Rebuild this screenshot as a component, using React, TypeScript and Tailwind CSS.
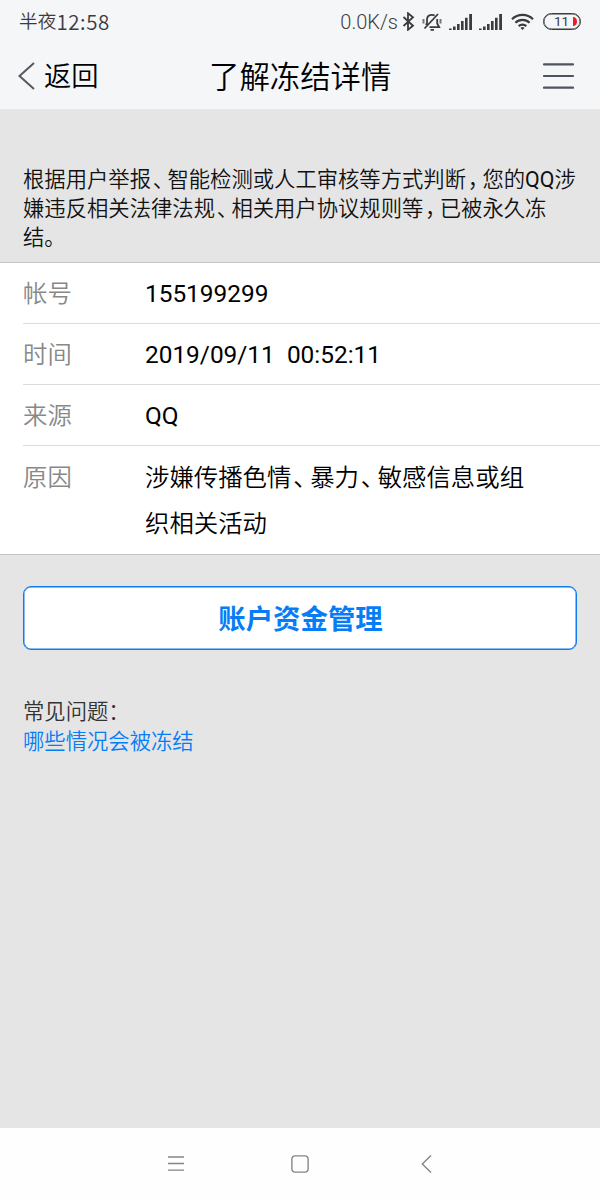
import { Fragment } from "react";
import type { ReactNode } from "react";

const details = [
  { label: "帐号", value: "155199299" },
  { label: "时间", value: "2019/09/11  00:52:11" },
  { label: "来源", value: "QQ" },
];

export default function App() {
  return (
    <main className="flex h-[1200px] w-[600px] flex-col overflow-hidden bg-[#e5e5e5] font-['Roboto','Noto_Sans_CJK_SC',sans-serif] font-[350] text-black">
      <div className="h-[109px] bg-[#f5f6f8]">
        <StatusBar />
        <TitleBar />
      </div>

      <section className="h-[153px] pl-[23px] pt-[56px] text-[21.33px] leading-[29px] whitespace-nowrap text-[#111]">
        <p><Text>根据用户举报、智能检测或人工审核等方式判断，您的QQ涉</Text></p>
        <p><Text>嫌违反相关法律法规、相关用户协议规则等，已被永久冻</Text></p>
        <p><Text>结。</Text></p>
      </section>

      <DetailList />

      <section className="flex-1 px-[23px] pt-[31px]">
        <button
          className="flex h-16 w-full items-center justify-center rounded-lg border border-[#0f7bf0] bg-white pl-px pt-1.5 text-[27.4px] font-bold text-[#067df7] shadow-[inset_0_0_0_0.5px_#0f7bf0]"
          type="button"
        >
          账户资金管理
        </button>
        <div className="pt-[47px] text-[21.33px] leading-[29.5px]">
          <p className="text-[#333]">常见问题：</p>
          <a className="block text-[#067df7]">哪些情况会被冻结</a>
        </div>
      </section>

      <SystemNav />
    </main>
  );
}

// Narrows full-width commas so they don't take a whole character cell.
function Text({ children }: { children: string }) {
  return children.split(/([、，]|QQ)/).map((part, index) => (
    <Fragment key={index}>
      {part === "、" || part === "，" ? (
        <span className="ml-[0.08em] tracking-[-0.31em]">{part}</span>
      ) : part === "QQ" ? (
        <span className="font-normal">{part}</span>
      ) : (
        part
      )}
    </Fragment>
  ));
}

function StatusBar() {
  return (
    <header className="flex h-[43px] items-center pl-[19px] pr-[19px] text-[#3c3c3e]">
      <span className="flex flex-1 items-center">
        <span className="pt-0.5 text-[18.7px]">半夜</span>
        <span className="font-['Noto_Sans_CJK_SC',sans-serif] text-[20.5px] leading-6 tracking-[0.6px]">12:58</span>
      </span>
      <span className="text-[20px]">0.0K/s</span>
      <svg className="ml-1 h-[19px] w-[13px]" viewBox="0 0 13 19" fill="none" stroke="currentColor" strokeWidth="1.8">
        <path d="m1.5 5 9.5 8.8-5 4V1.2l5 4L1.5 14" />
      </svg>
      <svg className="ml-[7px] h-[20px] w-[20px]" viewBox="0 0 20 20" fill="none" stroke="currentColor" strokeWidth="1.8">
        <path d="M4 13 5 11V7.500C5 4.500 7 2.800 10 2.800q1.500 0 2.600.700M15.200 7v4.500l2 3.700H7.500M2.500 16.500 16 2M8.500 17.800h3.500" />
        <path d="M1.500 7v4.500M18.500 7v4.500" strokeWidth="2" stroke="#77777a" />
      </svg>
      <Signal />
      <Signal />
      <svg className="ml-[9px] h-[17px] w-[23px]" viewBox="0 0 23 17" fill="none" stroke="currentColor" strokeWidth="2.2">
        <path d="M1 6.2a15 15 0 0 1 21 0M4.4 9.8a10 10 0 0 1 14.2 0M7.7 13.1a5.4 5.4 0 0 1 7.6 0" />
        <path d="m11.5 17-2-2.1a2.8 2.8 0 0 1 4 0Z" fill="currentColor" stroke="none" />
      </svg>
      <div className="relative ml-[9px] flex h-[17px] w-[38px] items-center justify-center overflow-hidden rounded-full border border-[#3c3c3e] text-[13.5px] font-normal shadow-[inset_0_0_0_0.5px_#3c3c3e]">
        <span className="pr-px">11</span>
        <svg className="absolute right-[3px] top-[3px] h-[9px] w-1" viewBox="0 0 4 9" fill="#ee1c24">
          <path d="M0 0h1q3 1 3 4.5T1 9H0Z" />
        </svg>
      </div>
    </header>
  );
}

function Signal() {
  return (
    <svg className="ml-[7px] h-[16px] w-[23px]" viewBox="0 0 23 16" fill="currentColor">
      <path d="M0 14.5h2.600V16H0ZM4 12.500h2.600V16H4ZM8 10h2.600v6H8ZM12 7h2.600v9H12ZM16 3.800h2.600V16H16ZM20.200 0H23v16h-2.800Z" />
    </svg>
  );
}

function TitleBar() {
  return (
    <nav className="flex h-[66px] items-center pl-[18px] pr-[26px]">
      <svg className="h-7 w-[17px]" viewBox="0 0 17 28" fill="none" stroke="#55585f" strokeWidth="2">
        <path d="M16 1 1.5 14 16 27" />
      </svg>
      <span className="ml-[9px] w-[165px] pt-0.5 text-[27.3px]">返回</span>
      <h1 className="flex-1 pt-1 text-[30.4px]">了解冻结详情</h1>
      <svg className="h-[26px] w-[31px]" viewBox="0 0 31 26" stroke="#50545c" strokeWidth="2.2" strokeLinecap="round">
        <path d="M1 1.3h29M1 13h29M1 24.6h29" />
      </svg>
    </nav>
  );
}

function DetailList() {
  return (
    <section className="h-[293px] border-y border-[#c4c4c4] bg-white pl-[23px] text-[24.4px]">
      {details.map((item) => (
        <Row key={item.label} label={item.label}>
          {item.value}
        </Row>
      ))}
      <div className="flex pt-[9px] leading-[45.5px]">
        <span className="w-[122px] text-[#888]">原因</span>
        <div className="whitespace-nowrap">
          <p><Text>涉嫌传播色情、暴力、敏感信息或组</Text></p>
          <p>织相关活动</p>
        </div>
      </div>
    </section>
  );
}

function Row({ label, children }: { label: string; children: ReactNode }) {
  return (
    <div className="flex h-[61px] items-center border-b border-[#dcdcdc] pt-[3px]">
      <span className="w-[122px] text-[#888]">{label}</span>
      <span className="font-normal whitespace-pre">{children}</span>
    </div>
  );
}

function SystemNav() {
  return (
    <footer className="flex h-[72px] items-center bg-[#fefefe] pl-[168px] text-[#858585]">
      <svg className="h-4 w-4" viewBox="0 0 16 16" stroke="currentColor" strokeWidth="1.3">
        <path d="M0 1h16M0 7.5h16M0 14.2h16" />
      </svg>
      <svg className="ml-[107px] h-[18px] w-[18px]" viewBox="0 0 18 18" fill="none" stroke="currentColor" strokeWidth="1.4">
        <rect x="0.9" y="0.9" width="16.2" height="16.2" rx="3.4" />
      </svg>
      <svg className="ml-[112px] h-[18px] w-[11px]" viewBox="0 0 11 18" fill="none" stroke="currentColor" strokeWidth="1.4">
        <path d="M10 .5 1.3 9l8.7 8.5" />
      </svg>
    </footer>
  );
}
